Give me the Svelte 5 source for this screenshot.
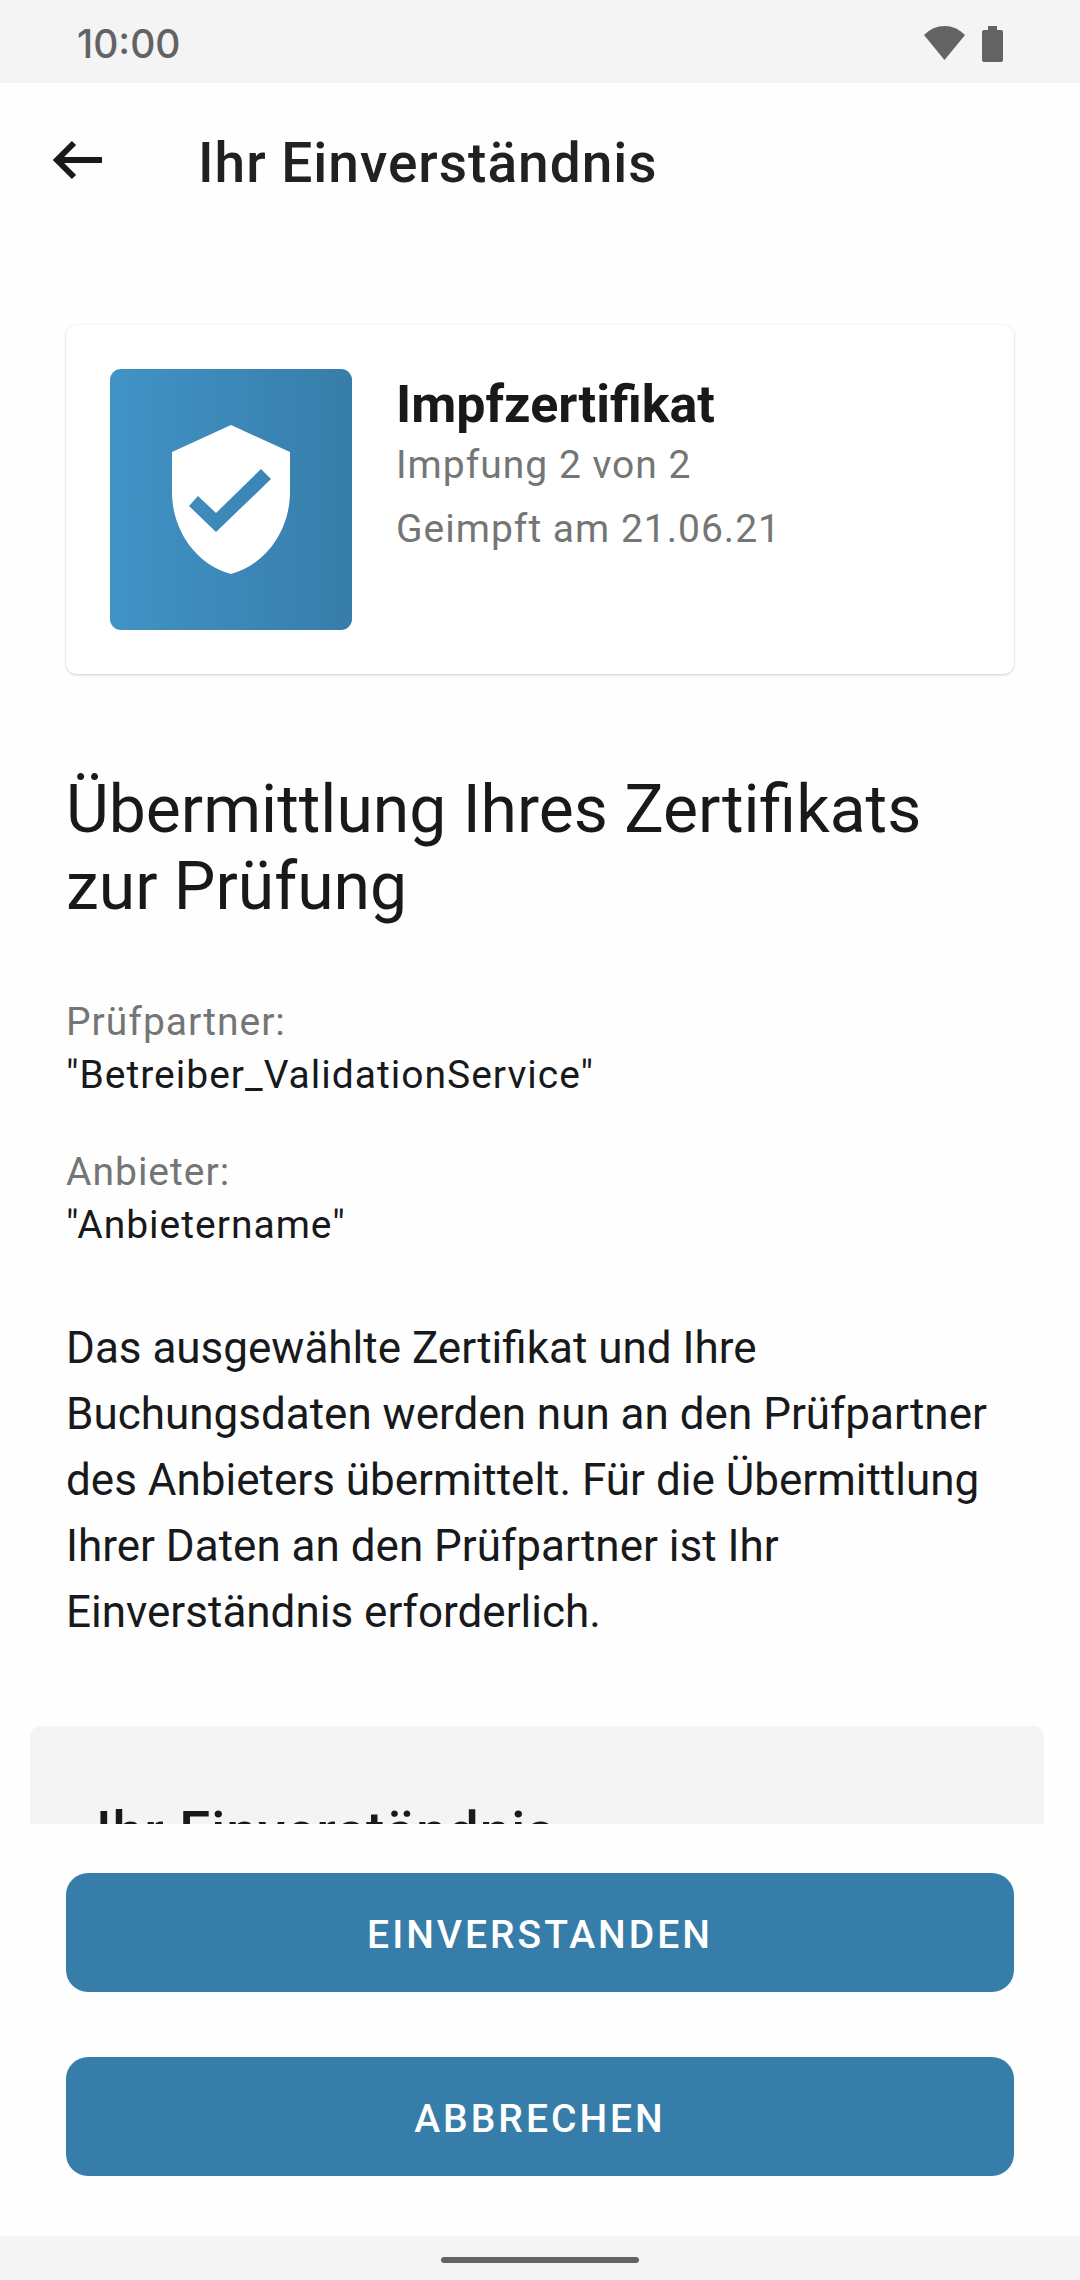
<script>
  const details = [
    { label: 'Prüfpartner:', value: '"Betreiber_ValidationService"' },
    { label: 'Anbieter:', value: '"Anbietername"' }
  ];
</script>

<div class="screen">
  <div class="status">
    <time>10:00</time>
    <div class="status-icons">
      <svg class="wifi" viewBox="0 0 41 34" aria-hidden="true">
        <path d="M0 9Q9 0 20.500 0T41 9L20.500 34Z" />
      </svg>
      <svg class="battery" viewBox="0 0 21 36" aria-hidden="true">
        <path d="M6 0h9v4h4a2 2 0 0 1 2 2v28a2 2 0 0 1-2 2H2a2 2 0 0 1-2-2V6a2 2 0 0 1 2-2h4Z" />
      </svg>
    </div>
  </div>

  <header>
    <button class="back" type="button" aria-label="Zurück">
      <svg viewBox="0 0 50 40" aria-hidden="true">
        <path d="M50 20H5M22 3L5 20L22 37" />
      </svg>
    </button>
    <h1>Ihr Einverständnis</h1>
  </header>

  <main>
    <article class="card">
      <svg class="tile" viewBox="0 0 242 261" aria-hidden="true">
        <path
          fill-rule="evenodd"
          d="M121 56L62 83V123C62 162 87 196 121 205C155 196 180 162 180 123V83ZM106 163L79 137L88 127L106 144L151 100L161 110Z"
        />
      </svg>
      <div class="card-text">
        <h2>Impfzertifikat</h2>
        <p>Impfung 2 von 2</p>
        <p>Geimpft am 21.06.21</p>
      </div>
    </article>

    <h2 class="headline">Übermittlung Ihres Zertifikats zur Prüfung</h2>

    <dl>
      {#each details as item}
        <div>
          <dt>{item.label}</dt>
          <dd>{item.value}</dd>
        </div>
      {/each}
    </dl>

    <p class="body">
      Das ausgewählte Zertifikat und Ihre Buchungsdaten werden nun an den Prüfpartner des Anbieters
      übermittelt. Für die Übermittlung Ihrer Daten an den Prüfpartner ist Ihr Einverständnis
      erforderlich.
    </p>

    <section class="consent">
      <h2>Ihr Einverständnis</h2>
    </section>
  </main>

  <footer>
    <button type="button">Einverstanden</button>
    <button type="button">Abbrechen</button>
  </footer>

  <div class="nav"><span></span></div>
</div>

<style>
  :global(body) {
    margin: 0;
    background: #fefefe;
  }

  .screen {
    display: flex;
    flex-direction: column;
    height: 100vh;
    background: #fefefe;
    color: #18191b;
    font-family: Roboto, "Liberation Sans", sans-serif;
  }

  h1, h2, p, dl, dd {
    margin: 0;
  }

  button {
    border: 0;
    font-family: inherit;
    cursor: pointer;
  }

  .status {
    flex: none;
    display: flex;
    align-items: center;
    justify-content: space-between;
    box-sizing: border-box;
    height: 83px;
    padding: 4px 77px 0;
    background: #f4f4f4;
    color: #636363;
  }

  time {
    font: 500 39px/48px Inter, Roboto, sans-serif;
  }

  .status-icons {
    display: flex;
    gap: 17px;
  }

  .status-icons svg {
    fill: #636363;
  }

  .wifi {
    width: 41px;
    height: 34px;
  }

  .battery {
    width: 21px;
    height: 36px;
  }

  header {
    flex: none;
    display: flex;
    align-items: center;
    height: 154px;
    padding: 0 44px;
  }

  .back {
    display: flex;
    width: 154px;
    padding: 8px;
    background: none;
  }

  .back svg {
    width: 50px;
    height: 40px;
    fill: none;
    stroke: #18191b;
    stroke-width: 6;
  }

  h1, .consent h2 {
    font-size: 55px;
    font-weight: 500;
    line-height: 64px;
    letter-spacing: 1px;
  }

  h1 {
    padding-top: 6px;
    color: #212121;
  }

  main {
    flex: 1;
    min-height: 0;
    overflow-y: auto;
    scrollbar-width: none;
    padding: 88px 66px 0;
  }

  .card {
    display: flex;
    gap: 44px;
    padding: 44px;
    border-radius: 11px;
    background: #fff;
    box-shadow: 0 1px 3px rgba(0, 0, 0, 0.2);
  }

  .tile {
    flex: none;
    width: 242px;
    height: 261px;
    border-radius: 11px;
    background: linear-gradient(90deg, #4193c6, #3c88b8 50%, #377daa);
    fill: #fff;
  }

  .card-text {
    padding-top: 8px;
  }

  .card-text h2 {
    font-size: 52px;
    font-weight: 700;
    line-height: 56px;
  }

  .card-text p {
    font-size: 39px;
    line-height: 64px;
    letter-spacing: 1px;
    color: #747676;
  }

  .headline {
    margin-top: 97px;
    font-size: 66px;
    font-weight: 400;
    line-height: 77px;
  }

  dl {
    display: grid;
    gap: 44px;
    margin-top: 71px;
    font-size: 39px;
    line-height: 53px;
    letter-spacing: 1px;
  }

  dt {
    color: #747676;
  }

  .body {
    margin-top: 63px;
    font-size: 44px;
    line-height: 66px;
  }

  .consent {
    margin: 81px -30px 0 -36px;
    padding: 74px 66px;
    border-radius: 11px;
    background: #f4f4f4;
  }

  footer {
    flex: none;
    display: grid;
    gap: 65px;
    padding: 49px 66px 60px;
  }

  footer button {
    height: 119px;
    padding: 4px 0 0;
    border-radius: 22px;
    background: #377daa;
    color: #fff;
    font-size: 39px;
    font-weight: 500;
    letter-spacing: 3px;
    text-transform: uppercase;
  }

  .nav {
    flex: none;
    display: flex;
    align-items: center;
    justify-content: center;
    height: 44px;
    padding-top: 4px;
    box-sizing: border-box;
    background: #f4f4f4;
  }

  .nav span {
    width: 198px;
    height: 6px;
    border-radius: 3px;
    background: #636363;
  }
</style>
